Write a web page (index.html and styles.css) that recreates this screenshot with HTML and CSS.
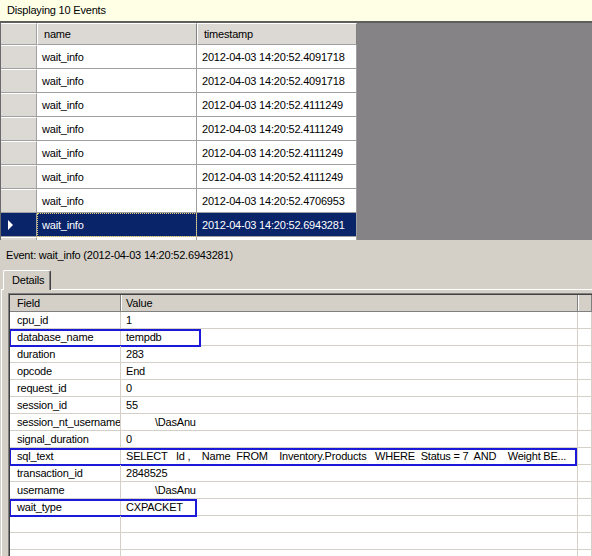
FILE: index.html
```html
<!DOCTYPE html>
<html lang="en">
<head>
    <meta charset="UTF-8">
    <meta name="viewport" content="width=device-width, initial-scale=1.0">
    <title>Displaying 10 Events</title>
    <link rel="stylesheet" href="styles.css">
</head>
<body>
    <div class="status-bar">Displaying 10 Events</div>

    <div class="events">
        <div class="ev-row ev-head">
            <div class="rh"></div>
            <div class="cell">name</div>
            <div class="cell">timestamp</div>
        </div>
        <div class="ev-row">
            <div class="rh"></div>
            <div class="cell">wait_info</div>
            <div class="cell">2012-04-03 14:20:52.4091718</div>
        </div>
        <div class="ev-row">
            <div class="rh"></div>
            <div class="cell">wait_info</div>
            <div class="cell">2012-04-03 14:20:52.4091718</div>
        </div>
        <div class="ev-row">
            <div class="rh"></div>
            <div class="cell">wait_info</div>
            <div class="cell">2012-04-03 14:20:52.4111249</div>
        </div>
        <div class="ev-row">
            <div class="rh"></div>
            <div class="cell">wait_info</div>
            <div class="cell">2012-04-03 14:20:52.4111249</div>
        </div>
        <div class="ev-row">
            <div class="rh"></div>
            <div class="cell">wait_info</div>
            <div class="cell">2012-04-03 14:20:52.4111249</div>
        </div>
        <div class="ev-row">
            <div class="rh"></div>
            <div class="cell">wait_info</div>
            <div class="cell">2012-04-03 14:20:52.4111249</div>
        </div>
        <div class="ev-row">
            <div class="rh"></div>
            <div class="cell">wait_info</div>
            <div class="cell">2012-04-03 14:20:52.4706953</div>
        </div>
        <div class="ev-row selected">
            <div class="rh"><span class="arrow"></span></div>
            <div class="cell focus">wait_info</div>
            <div class="cell">2012-04-03 14:20:52.6943281</div>
        </div>
        <div class="ev-row">
            <div class="rh"></div>
            <div class="cell"></div>
            <div class="cell"></div>
        </div>
    </div>

    <div class="detail-pane">
        <div class="event-label">Event: wait_info (2012-04-03 14:20:52.6943281)</div>

        <div class="tabs">
            <div class="tab">Details</div>
        </div>

        <div class="tab-page">
            <div class="props">
                <div class="props-inner">
                    <div class="p-row p-head">
                        <div class="p-cell">Field</div>
                        <div class="p-cell">Value</div>
                        <div class="p-cell"></div>
                    </div>
                    <div class="p-row">
                        <div class="p-cell">cpu_id</div>
                        <div class="p-cell">1</div>
                        <div class="p-cell"></div>
                    </div>
                    <div class="p-row">
                        <div class="p-cell">database_name</div>
                        <div class="p-cell">tempdb</div>
                        <div class="p-cell"></div>
                        <span class="mark mark-db"></span>
                    </div>
                    <div class="p-row">
                        <div class="p-cell">duration</div>
                        <div class="p-cell">283</div>
                        <div class="p-cell"></div>
                    </div>
                    <div class="p-row">
                        <div class="p-cell">opcode</div>
                        <div class="p-cell">End</div>
                        <div class="p-cell"></div>
                    </div>
                    <div class="p-row">
                        <div class="p-cell">request_id</div>
                        <div class="p-cell">0</div>
                        <div class="p-cell"></div>
                    </div>
                    <div class="p-row">
                        <div class="p-cell">session_id</div>
                        <div class="p-cell">55</div>
                        <div class="p-cell"></div>
                    </div>
                    <div class="p-row">
                        <div class="p-cell">session_nt_username</div>
                        <div class="p-cell indent">\DasAnu</div>
                        <div class="p-cell"></div>
                    </div>
                    <div class="p-row">
                        <div class="p-cell">signal_duration</div>
                        <div class="p-cell">0</div>
                        <div class="p-cell"></div>
                    </div>
                    <div class="p-row">
                        <div class="p-cell">sql_text</div>
                        <div class="p-cell sql">SELECT   Id ,    Name  FROM    Inventory.Products   WHERE  Status = 7  AND    Weight BE...</div>
                        <div class="p-cell"></div>
                        <span class="mark mark-sql"></span>
                    </div>
                    <div class="p-row">
                        <div class="p-cell">transaction_id</div>
                        <div class="p-cell">2848525</div>
                        <div class="p-cell"></div>
                    </div>
                    <div class="p-row">
                        <div class="p-cell">username</div>
                        <div class="p-cell indent">\DasAnu</div>
                        <div class="p-cell"></div>
                    </div>
                    <div class="p-row">
                        <div class="p-cell">wait_type</div>
                        <div class="p-cell">CXPACKET</div>
                        <div class="p-cell"></div>
                        <span class="mark mark-wait"></span>
                    </div>
                    <div class="p-row">
                        <div class="p-cell"></div>
                        <div class="p-cell"></div>
                        <div class="p-cell"></div>
                    </div>
                    <div class="p-row">
                        <div class="p-cell"></div>
                        <div class="p-cell"></div>
                        <div class="p-cell"></div>
                    </div>
                    <div class="p-row">
                        <div class="p-cell"></div>
                        <div class="p-cell"></div>
                        <div class="p-cell"></div>
                    </div>
                </div>
            </div>
        </div>
    </div>
</body>
</html>
```

FILE: styles.css
```css
/* Visualizador de eventos */
:root {
    --face: #d4d0c8;
    --head: #dcd8d3;
    --shadow: #808080;
    --dark: #404040;
    --grid-line: #a0a0a0;
    --light-line: #d4d0c8;
    --empty: #858385;
    --tip: #ffffe6;
    --select: #0a246a;
    --mark: #1a1ad8;
}

* {
    margin: 0;
    padding: 0;
    box-sizing: border-box;
}

html, body {
    width: 592px;
    height: 556px;
    overflow: hidden;
}

body {
    font-family: 'Liberation Sans', Tahoma, Arial, sans-serif;
    font-size: 11px;
    letter-spacing: -0.2px;
    color: #000;
    background-color: var(--face);
}

.status-bar {
    height: 23px;
    line-height: 21px;
    padding-left: 7px;
    background-color: var(--tip);
    border-bottom: 2px solid #5e5e5e;
}

/* grade superior */
.events {
    height: 217px;
    overflow: hidden;
    background-color: var(--empty);
    border-left: 1px solid #6a6a6a;
}

.ev-row {
    display: grid;
    grid-template-columns: 36px 160px 160px;
    height: 24px;
    background-color: #fff;
    width: 356px;
}

.ev-row .rh {
    background-color: var(--head);
    border-right: 1px solid var(--grid-line);
    border-bottom: 1px solid var(--grid-line);
    border-top: 1px solid #fff;
    display: flex;
    align-items: center;
    padding-left: 7px;
}

.ev-row .cell {
    border-right: 1px solid var(--grid-line);
    border-bottom: 1px solid var(--grid-line);
    padding-left: 5px;
    line-height: 24px;
    white-space: nowrap;
    overflow: hidden;
}

.ev-head {
    height: 22px;
}

.ev-head .cell {
    background-color: var(--head);
    border-top: 1px solid #fff;
    border-left: 1px solid #fff;
    border-right: 1px solid var(--shadow);
    padding-left: 6px;
    line-height: 21px;
}

.selected .rh,
.selected .cell {
    background-color: var(--select);
    color: #fff;
    border-top-color: var(--select);
}

.focus {
    outline: 1px dotted #e6d27a;
    outline-offset: -1px;
}

.arrow {
    width: 0;
    height: 0;
    border-top: 5px solid transparent;
    border-bottom: 5px solid transparent;
    border-left: 5px solid #fff;
}

/* painel de detalhes */
.detail-pane {
    height: 316px;
}

.event-label {
    height: 28px;
    padding: 8px 0 0 6px;
    line-height: 14px;
}

.tabs {
    height: 21px;
    display: flex;
    align-items: flex-end;
    padding-left: 3px;
}

.tab {
    width: 48px;
    height: 20px;
    margin-bottom: -1px;
    position: relative;
    z-index: 1;
    background-color: var(--face);
    border-top: 1px solid #fff;
    border-left: 1px solid #fff;
    border-right: 1px solid var(--dark);
    border-radius: 2px 2px 0 0;
    box-shadow: inset -1px 0 0 var(--shadow);
    padding-left: 8px;
    line-height: 18px;
}

.tab-page {
    height: 268px;
    margin-left: 1px;
    border-top: 1px solid #fff;
    border-left: 1px solid #fff;
    padding: 3px 0 0 6px;
}

.props {
    height: 100%;
    border-top: 1px solid var(--shadow);
    border-left: 1px solid var(--shadow);
}

.props-inner {
    height: 100%;
    background-color: #fff;
    border-top: 1px solid var(--dark);
    border-left: 1px solid var(--dark);
    overflow: hidden;
}

.p-row {
    display: grid;
    grid-template-columns: 111px 457px 1fr;
    height: 17px;
    position: relative;
}

.p-cell {
    border-right: 1px solid var(--light-line);
    border-bottom: 1px solid var(--light-line);
    padding-left: 5px;
    line-height: 17px;
    white-space: pre;
    overflow: hidden;
}

.p-cell:first-child {
    padding-left: 7px;
}

.p-head .p-cell {
    background-color: var(--face);
    border-right: 1px solid var(--shadow);
    border-bottom: 1px solid var(--shadow);
    box-shadow: inset 1px 0 0 #fff;
}

.p-head .p-cell:first-child {
    box-shadow: none;
}

.indent {
    padding-left: 34px;
}

/* marcas azuis por cima das linhas */
.mark {
    position: absolute;
    top: 0;
    left: -1px;
    height: 18px;
    border: 2px solid var(--mark);
    pointer-events: none;
}

.mark-db { width: 192px; }
.mark-sql { width: 568px; }
.mark-wait { width: 188px; }
```
